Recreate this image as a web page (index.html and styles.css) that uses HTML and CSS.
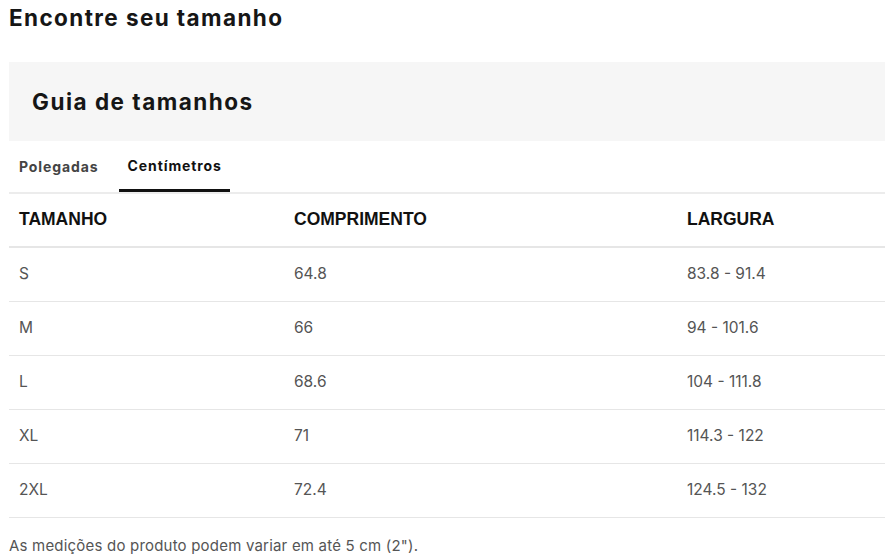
FILE: index.html
```html
<!DOCTYPE html>
<html lang="pt">
<head>
<meta charset="utf-8">
<link rel="stylesheet" href="styles.css">
</head>
<body>
<div class="page">
  <h1 class="title">Encontre seu tamanho</h1>
  <div class="guide-head"><h2>Guia de tamanhos</h2></div>
  <div class="tabs">
    <div class="tab">Polegadas</div>
    <div class="tab active">Centímetros</div>
  </div>
  <table class="sizes">
    <thead>
      <tr><th class="c1">TAMANHO</th><th class="c2">COMPRIMENTO</th><th class="c3">LARGURA</th></tr>
    </thead>
    <tbody>
      <tr><td>S</td><td>64.8</td><td>83.8 - 91.4</td></tr>
      <tr><td>M</td><td>66</td><td>94 - 101.6</td></tr>
      <tr><td>L</td><td>68.6</td><td>104 - 111.8</td></tr>
      <tr><td>XL</td><td>71</td><td>114.3 - 122</td></tr>
      <tr><td>2XL</td><td>72.4</td><td>124.5 - 132</td></tr>
    </tbody>
  </table>
  <p class="note">As medições do produto podem variar em até 5 cm (2").</p>
</div>
</body>
</html>
```
FILE: styles.css
```css
* { box-sizing: border-box; }
html, body { margin: 0; padding: 0; background: #fff; }
body { font-family: "Inter", "Open Sans", sans-serif; color: #111; }
.page { width: 876px; margin-left: 9px; }
.title {
  margin: 0;
  height: 62px;
  padding-top: 3px;
  font-size: 22.5px;
  font-weight: 700;
  letter-spacing: 1.4px;
  line-height: 30px;
  color: #161616;
}
.guide-head {
  background: #f6f6f6;
  height: 79px;
  padding: 25px 0 0 23px;
}
.guide-head h2 {
  margin: 0;
  font-size: 22.5px;
  font-weight: 700;
  letter-spacing: 1.5px;
  line-height: 30px;
  color: #161616;
}
.tabs {
  display: flex;
  height: 53px;
  border-bottom: 2px solid #ececec;
}
.tab {
  padding: 0 20px 0 10px;
  font-size: 14px;
  font-weight: 700;
  letter-spacing: 0.9px;
  color: #444;
  line-height: 51px;
  height: 51px;
}
.tab.active {
  color: #111;
  border-bottom: 3px solid #111;
  padding-left: 9px;
  padding-right: 8px;
  padding-top: 1px;
  line-height: 48px;
}
.sizes {
  width: 876px;
  border-collapse: collapse;
  table-layout: fixed;
}
.sizes th, .sizes td {
  text-align: left;
  padding: 0 0 0 10px;
  vertical-align: middle;
}
.sizes th {
  font-family: "Liberation Sans", Arial, sans-serif;
  font-size: 17.5px;
  font-weight: 700;
  color: #111;
  height: 53px;
  padding-bottom: 2px;
  border-bottom: 2px solid #e6e6e6;
}
.c1 { width: 275px; }
.c2 { width: 393px; }
.sizes td {
  font-size: 15.5px;
  color: #555;
  height: 54px;
  padding-bottom: 1px;
  border-bottom: 1px solid #e6e6e6;
}
.note {
  margin: 18px 0 0;
  font-size: 15px;
  letter-spacing: 0.2px;
  color: #555;
}
```
